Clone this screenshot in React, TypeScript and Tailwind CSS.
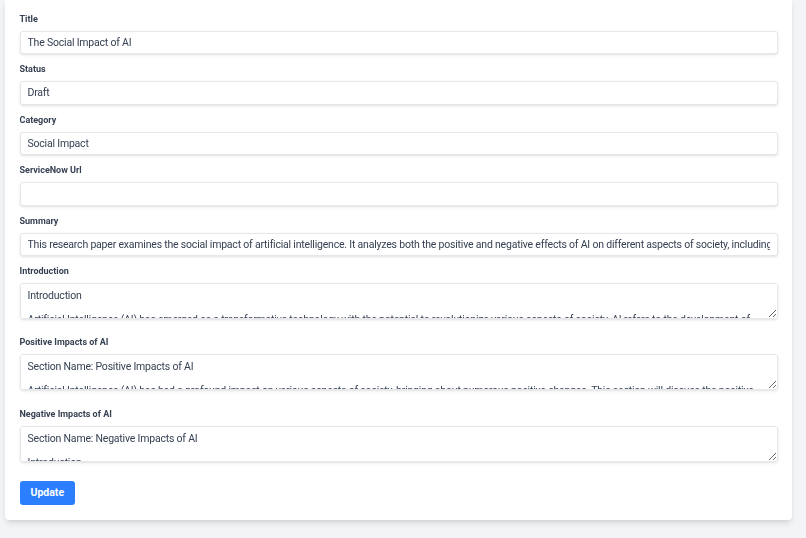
import React from "react";

const font = { fontFamily: "Roboto, 'Noto Sans', sans-serif" };

function Label({ children }: { children: React.ReactNode }) {
  return (
    <label className="block text-[9px] leading-[12px] font-bold text-gray-700 mb-[6px]">
      {children}
    </label>
  );
}

function Field({ label, value }: { label: string; value: string }) {
  return (
    <div className="mb-[9px]">
      <Label>{label}</Label>
      <input
        readOnly
        value={value}
        className="block w-full h-[23.5px] rounded-[3px] border border-gray-200 shadow-sm bg-white px-[7px] text-[10.5px] leading-[13px] tracking-[-0.2px] text-gray-700 outline-none"
      />
    </div>
  );
}

function Area({ label, value }: { label: string; value: string }) {
  return (
    <div className="mb-[17.25px]">
      <Label>{label}</Label>
      <textarea
        readOnly
        value={value}
        className="block w-full h-[36px] rounded-[3px] border border-gray-200 shadow-sm bg-white px-[7px] pt-[6px] pb-[4px] text-[10.5px] leading-[12px] tracking-[-0.2px] text-gray-700 outline-none"
      />
    </div>
  );
}

export default function App() {
  return (
    <div className="min-h-screen bg-gray-100" style={font}>
      <div className="ml-[5px] w-[787px] bg-white rounded-b-[4px] shadow-md px-[14.5px] pt-[12.5px] pb-[15px]">
        <Field label="Title" value="The Social Impact of AI" />
        <Field label="Status" value="Draft" />
        <Field label="Category" value="Social Impact" />
        <Field label="ServiceNow Url" value="" />
        <Field
          label="Summary"
          value="This research paper examines the social impact of artificial intelligence. It analyzes both the positive and negative effects of AI on different aspects of society, including employment, privacy, and ethics."
        />
        <Area
          label="Introduction"
          value={
            "Introduction\n\nArtificial Intelligence (AI) has emerged as a transformative technology with the potential to revolutionize various aspects of society. AI refers to the development of computer systems that can perform tasks that typically require human intelligence."
          }
        />
        <Area
          label="Positive Impacts of AI"
          value={
            "Section Name: Positive Impacts of AI\n\nArtificial Intelligence (AI) has had a profound impact on various aspects of society, bringing about numerous positive changes. This section will discuss the positive impacts of AI on healthcare, education and industry."
          }
        />
        <Area
          label="Negative Impacts of AI"
          value={"Section Name: Negative Impacts of AI\n\nIntroduction\n\nWhile AI offers many benefits, it also poses significant risks."}
        />
        <button className="h-[24px] px-[11px] rounded-[3px] bg-blue-500 text-white text-[10.5px] font-bold">
          Update
        </button>
      </div>
    </div>
  );
}
